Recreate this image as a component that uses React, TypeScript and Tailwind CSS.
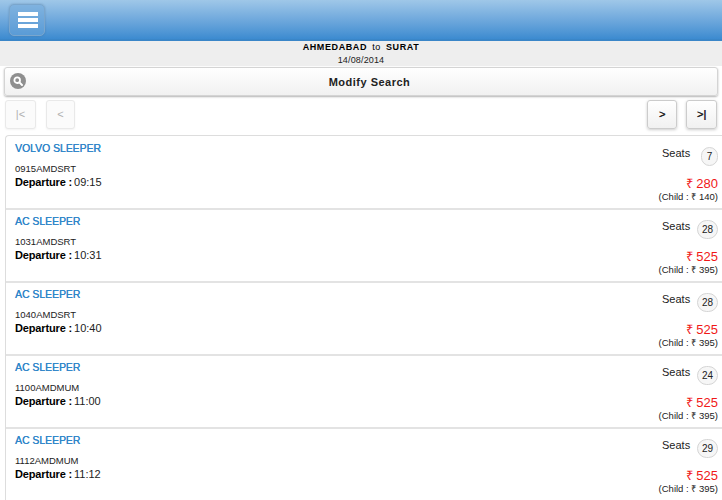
import React from "react";

const buses = [
  { name: "VOLVO SLEEPER", code: "0915AMDSRT", time: "09:15", seats: "7", fare: "280", child: "140" },
  { name: "AC SLEEPER", code: "1031AMDSRT", time: "10:31", seats: "28", fare: "525", child: "395" },
  { name: "AC SLEEPER", code: "1040AMDSRT", time: "10:40", seats: "28", fare: "525", child: "395" },
  { name: "AC SLEEPER", code: "1100AMDMUM", time: "11:00", seats: "24", fare: "525", child: "395" },
  { name: "AC SLEEPER", code: "1112AMDMUM", time: "11:12", seats: "29", fare: "525", child: "395" },
];

const PageButton = ({ label, off, width }: { label: string; off?: boolean; width: string }) => (
  <div
    className={
      off
        ? `flex h-[29px] items-center justify-center rounded-[3px] border border-[#e9e9e9] bg-[#fbfbfb] text-[11px] text-[#b0b0b0] shadow-[0_1px_2px_rgba(0,0,0,0.05)] ${width}`
        : `flex h-[29px] items-center justify-center rounded-[3px] border border-[#cccccc] bg-gradient-to-b from-white to-[#f1f1f1] text-[11px] text-[#222222] [text-shadow:0.4px_0_0_#222222] shadow-[0_1px_3px_rgba(0,0,0,0.2)] ${width}`
    }
  >
    {label}
  </div>
);

const App = () => {
  return (
    <div className="h-[500px] w-[722px] overflow-hidden bg-white font-['Liberation_Sans',Arial,sans-serif] text-black">
      <header className="h-[41px] border-b-2 border-[#3a86c8] bg-gradient-to-b from-[#9fc7e8] to-[#3c8bd0] pl-[9px] pt-[4px]">
        <div className="flex h-[32px] w-[36px] flex-col items-center justify-center gap-[2px] rounded-[5px] border border-[#7aa6cd] bg-[#6ba6da]/50 pl-[1px] shadow-[0_0_2px_rgba(60,90,120,0.4)]">
          <span className="h-[4px] w-[20px] bg-white" />
          <span className="h-[4px] w-[20px] bg-white" />
          <span className="h-[4px] w-[20px] bg-white" />
        </div>
      </header>

      <div className="h-[25px] bg-[#eeeeee] text-center">
        <div className="text-[9px] font-bold leading-[12px] tracking-[0.6px]">
          AHMEDABAD <span className="mx-[2px] font-normal">to</span> SURAT
        </div>
        <div className="mt-[1px] text-[9px] leading-[12px] tracking-[0.15px] text-[#222222]">14/08/2014</div>
      </div>

      <div className="px-[4px] pt-[1px]">
        <div className="relative flex h-[29px] items-center justify-center rounded-[3px] border border-[#d4d4d4] bg-gradient-to-b from-white to-[#f1f1f1] pl-[17px] pt-[1px] text-[11px] font-bold tracking-[0.5px] text-[#222222] shadow-[0_1px_2px_rgba(0,0,0,0.3)]">
          <span className="absolute left-[5px] top-[5px] flex h-[16px] w-[16px] items-center justify-center rounded-full bg-[#8f8f8f]">
            <svg width="12" height="12" viewBox="0 0 12 12" fill="none">
              <circle cx="5.2" cy="5.2" r="2.8" stroke="white" strokeWidth="1.8" />
              <path d="M7.4 7.4 10 10" stroke="white" strokeWidth="2" strokeLinecap="round" />
            </svg>
          </span>
          Modify Search
        </div>
      </div>

      <div className="flex justify-between px-[5px] pb-[6px] pt-[4px]">
        <div className="flex gap-[10px]">
          <PageButton label="|<" off width="w-[31px]" />
          <PageButton label="<" off width="w-[29px]" />
        </div>
        <div className="flex gap-[9px]">
          <PageButton label=">" width="w-[30px]" />
          <PageButton label=">|" width="w-[31px]" />
        </div>
      </div>

      <div className="ml-[5px] rounded-tl-[4px] border-l border-t border-[#dddddd] pt-[1px]">
        {buses.map((bus) => (
          <div key={bus.code} className="flex h-[73px] justify-between border-b-2 border-[#e3e3e3] pl-[9px] pr-[4px]">
            <div>
              <div className="mt-[5px] text-[10.4px] leading-[14px] text-[#2f86c9] [text-shadow:0.3px_0_0_#2f86c9]">{bus.name}</div>
              <div className="mt-[7px] text-[9.5px] leading-[12px] text-[#222222]">{bus.code}</div>
              <div className="text-[11px] leading-[15px] text-[#222222]">
                <span className="mr-[2px] font-bold tracking-[-0.15px] text-black">Departure :</span>
                {bus.time}
              </div>
            </div>
            <div className="flex w-[70px] flex-col items-end">
              <div className="mt-[9px] flex w-[56px] justify-between text-[11px] leading-[14px] text-[#222222]">
                <span>Seats</span>
                <span className="mt-[1px] flex h-[19px] min-w-[17px] items-center justify-center rounded-full border border-[#d5d5d5] bg-[#f6f6f6] px-[4px] text-[10px]">
                  {bus.seats}
                </span>
              </div>
              <div className="mt-[10px] text-[13px] leading-[16px] text-[#f01818]">₹ {bus.fare}</div>
              <div className="-mt-[1px] text-[9.5px] leading-[11px] text-[#222222]">(Child : ₹ {bus.child})</div>
            </div>
          </div>
        ))}
      </div>
    </div>
  );
};

export default App;
